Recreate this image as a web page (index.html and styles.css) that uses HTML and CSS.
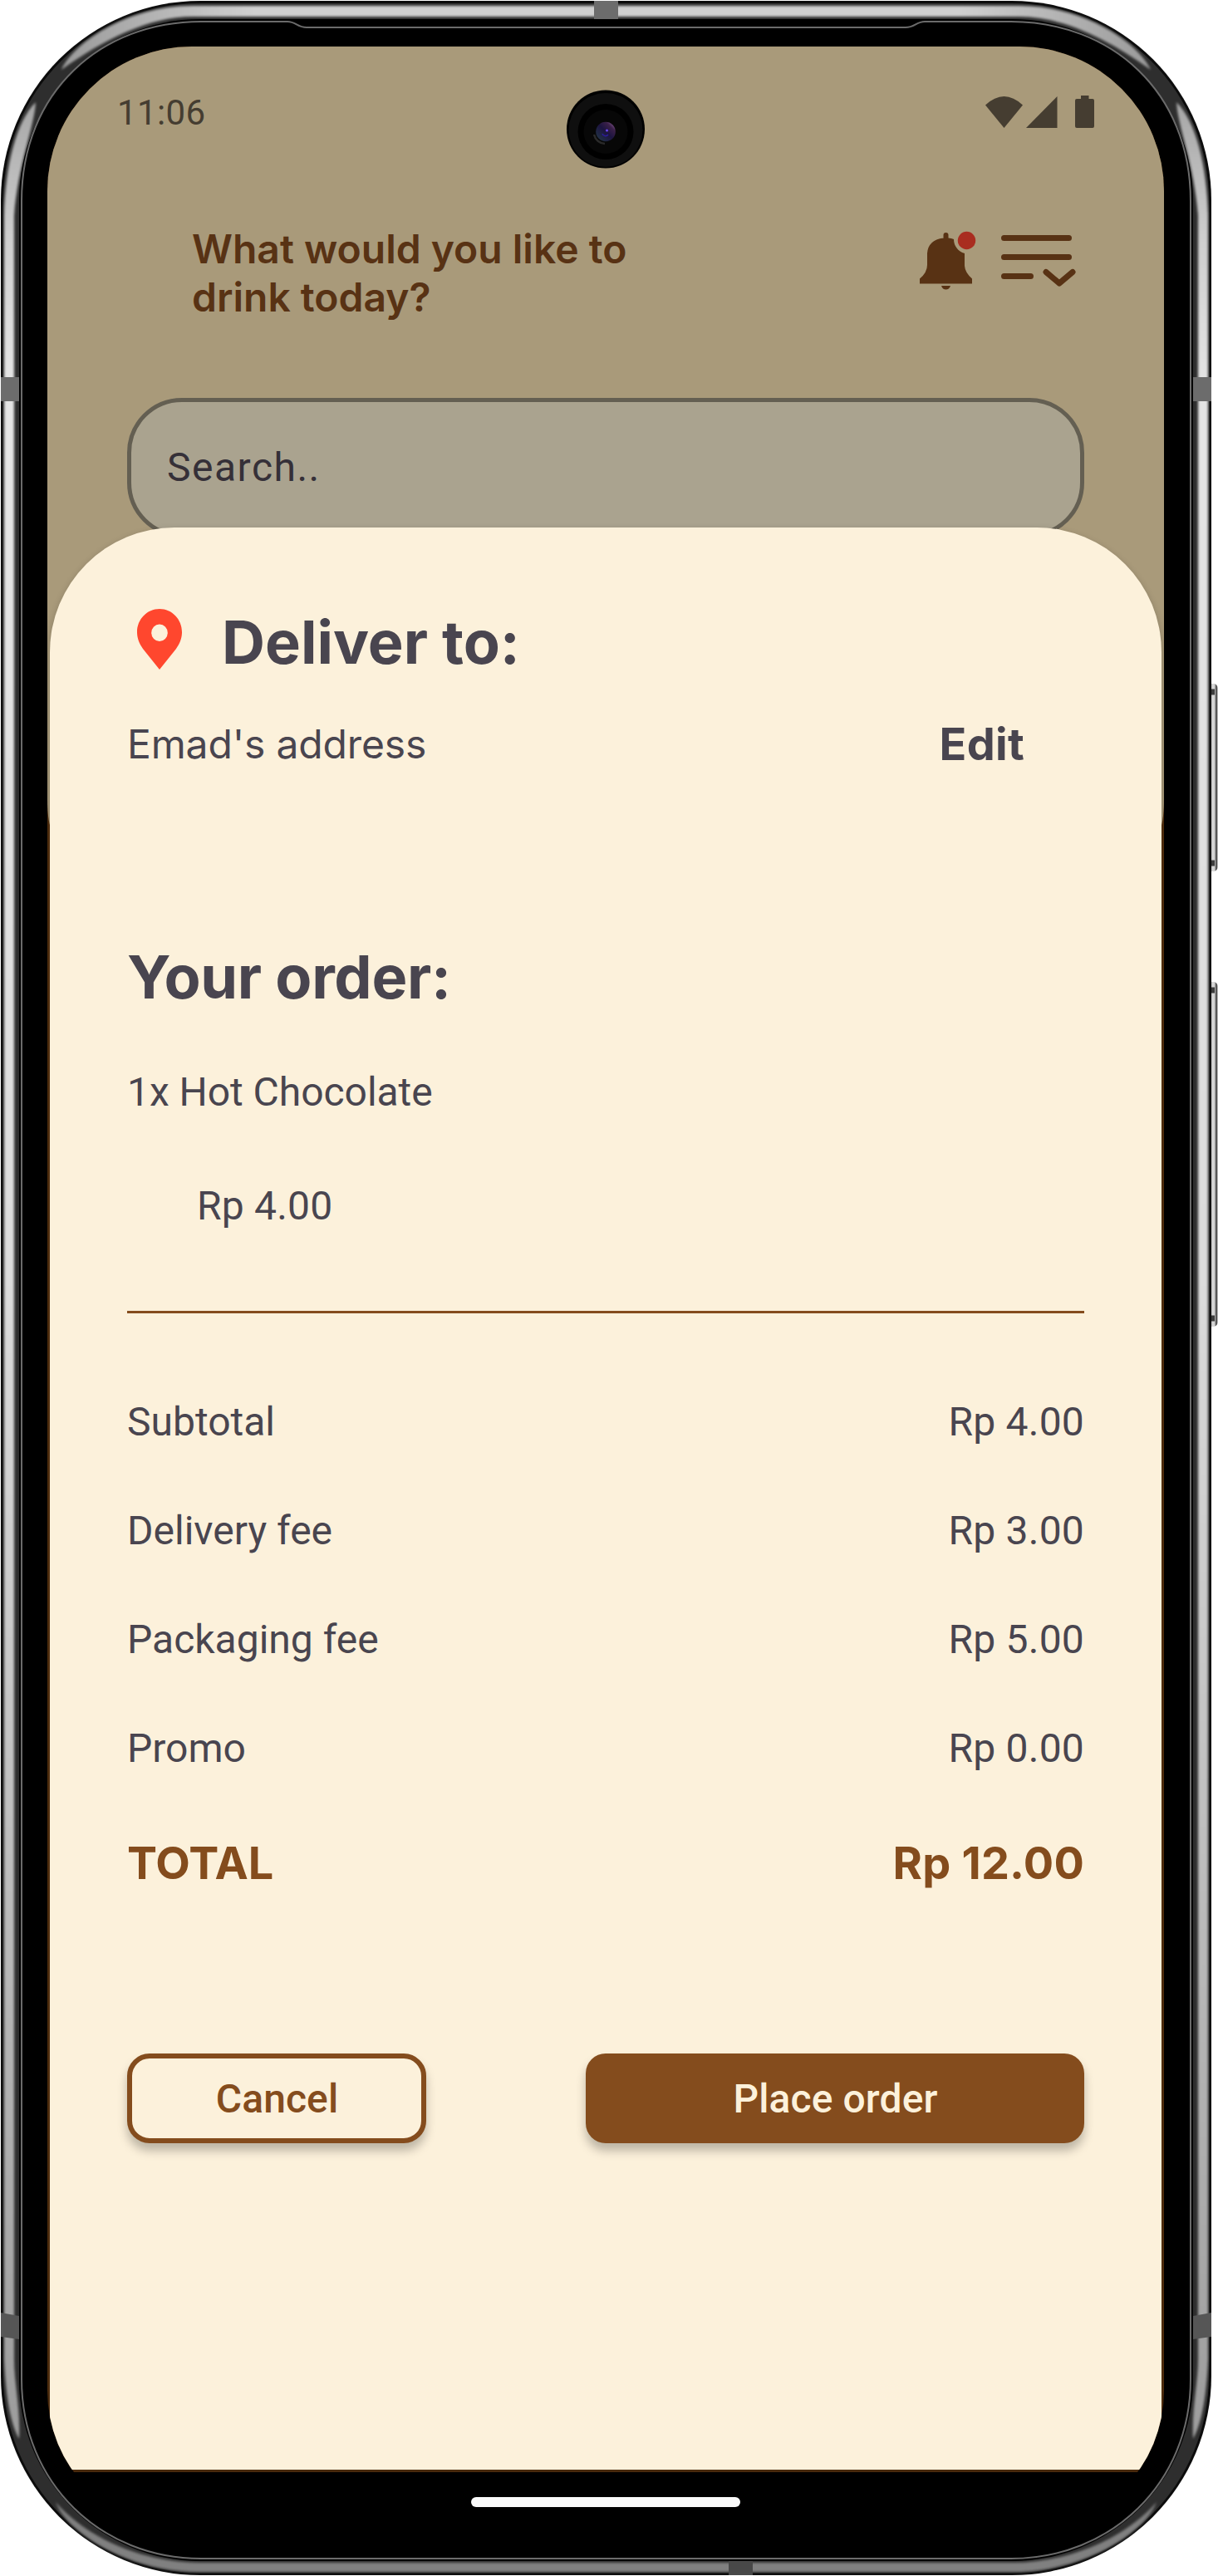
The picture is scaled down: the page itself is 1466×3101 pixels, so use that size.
FILE: index.html
```html
<!DOCTYPE html>
<html lang="en">
<head>
<meta charset="utf-8">
<title>Order summary</title>
<link rel="stylesheet" href="styles.css">
</head>
<body>
<div class="phone">
  <svg class="frame" viewBox="0 0 1466 3101" aria-hidden="true">
    <defs>
      <filter id="soft" x="-5%" y="-5%" width="110%" height="110%"><feGaussianBlur stdDeviation="1.6"/></filter>
      <linearGradient id="side" x1="0" y1="120" x2="0" y2="2940" gradientUnits="userSpaceOnUse">
        <stop offset="0" stop-color="#a5a5a5"/><stop offset=".06" stop-color="#cfcfcf"/><stop offset=".12" stop-color="#e4e4e4"/><stop offset=".5" stop-color="#dcdcdc"/><stop offset=".88" stop-color="#adadad"/><stop offset="1" stop-color="#9c9c9c"/>
      </linearGradient>
      <linearGradient id="top" x1="70" y1="0" x2="1390" y2="0" gradientUnits="userSpaceOnUse">
        <stop offset="0" stop-color="#999"/><stop offset=".18" stop-color="#d0d0d0"/><stop offset=".82" stop-color="#d0d0d0"/><stop offset="1" stop-color="#999"/>
      </linearGradient>
      <linearGradient id="key" x1="1456" y1="0" x2="1466" y2="0" gradientUnits="userSpaceOnUse">
        <stop offset="0" stop-color="#bbb"/><stop offset=".45" stop-color="#d8d8d8"/><stop offset=".6" stop-color="#ccc"/><stop offset=".8" stop-color="#3c3c3c"/><stop offset="1" stop-color="#888"/>
      </linearGradient>
    </defs>
    <g class="keys">
      <rect x="1450" y="823" width="15.500" height="226" rx="5" fill="url(#key)"/>
      <rect x="1450" y="1182" width="15.500" height="415" rx="5" fill="url(#key)"/>
      <path d="M1458 833h4M1458 1039h4M1458 1192h4M1458 1587h4" stroke="#3c3c3c" stroke-width="7"/>
    </g>
    <rect x="1" y="1" width="1457" height="3099" rx="240" fill="#0c0c0c"/>
    <rect x="4" y="4" width="1451" height="3093" rx="237" fill="#2e2e2e"/>
    <g filter="url(#soft)">
      <path fill="url(#top)" d="M74 84C86 55 150 7 232 7H1227C1309 7 1373 55 1385 84C1335 48 1280 20 1227 20H232C179 20 124 48 74 84Z"/>
      <path fill="#808080" d="M67 3012C78 3045 150 3096 240 3096H1219C1309 3096 1381 3045 1392 3012C1350 3060 1280 3085 1219 3085H240C179 3085 109 3060 67 3012Z"/>
      <path fill="url(#side)" d="M43 123C20 145 6 200 5 260V2840C7 2890 14 2920 23 2936C25 2900 17 2870 17 2840V260C21 200 42 150 43 123Z"/>
      <path fill="url(#side)" d="M1416 123C1439 145 1453 200 1454 260V2840C1452 2890 1445 2920 1436 2936C1434 2900 1442 2870 1442 2840V260C1438 200 1417 150 1416 123Z"/>
    </g>
    <g fill="#6c6c6c">
      <rect x="715" y="1" width="29" height="22"/>
      <rect x="1" y="454" width="22" height="29"/>
      <rect x="1436" y="454" width="22" height="29"/>
      <path fill="#565656" d="M1 2784l22 4v28l-22-3zM1458 2784l-22 4v28l22-3z"/>
      <rect x="877" y="3083" width="29" height="17" fill="#484848"/>
    </g>
    <rect x="23" y="23" width="1413" height="3060" rx="218" fill="#000"/>
    <path fill="none" stroke="#6b6b6b" stroke-width="2" d="M26 242C26 110 122 26 242 26H346C356 26 358 33 369 33H1090C1101 33 1103 26 1113 26H1217C1337 26 1433 110 1433 242V2864C1433 2990 1337 3080 1217 3080H242C122 3080 26 2990 26 2864Z"/>
  </svg>

  <div class="screen">
    <main class="app">
      <div class="backdrop">
        <div class="status">
          <span class="clock">11:06</span>
          <svg class="status-icons" width="132" height="40" viewBox="0 0 132 40" fill="#453d31">
            <path d="M0 11.500Q22.500-9.500 45 11.500L22.500 39Z"/>
            <path d="M49 39L86.500 1V39Z"/>
            <path d="M115 0h9.500v4H129q2 0 2 2V37q0 2-2 2H110q-2 0-2-2V6q0-2 2-2h5Z"/>
          </svg>
        </div>
        <header class="header">
          <h1 class="greeting">What would you like to<br>drink today?</h1>
          <svg class="header-icons" width="190" height="72" viewBox="0 0 190 72">
            <path fill="#583214" d="M28.500 9V5a3 3 0 0 1 6 0V8.500Q38 8.500 41 10C41 18 46 24.500 54 27V42Q54.500 50 63 57.500V63.500H0V57.500Q9 50 9 41V27Q10 11 28.500 8.500ZM26 66H37Q35.500 70.500 31.500 70.500T26 66Z"/>
            <circle cx="56.500" cy="11.500" r="10.700" fill="#a92d20"/>
            <path fill="none" stroke="#583214" stroke-width="7" stroke-linecap="round" stroke-linejoin="round" d="M101.500 8.500h78M101.500 31.500h78M101.500 54.500h32M152 49.500l16 13.500 16-13.500"/>
          </svg>
        </header>
        <div class="search">Search..</div>
      </div>

      <section class="sheet">
        <div class="deliver">
          <svg class="pin" width="54" height="73" viewBox="0 0 54 73">
            <path fill="#ff472e" fill-rule="evenodd" d="M27 0C12 0 0 12.500 0 28C0 36 3 42 7 48L27 73L47 48C51 42 54 36 54 28C54 12.500 42 0 27 0ZM27 18.500a9.800 10.250 0 0 1 0 20.500a9.800 10.250 0 0 1 0-20.500Z"/>
          </svg>
          <h2 class="title">Deliver to:</h2>
        </div>
        <div class="row address">
          <span class="address-name">Emad's address</span>
          <span class="edit">Edit</span>
        </div>
        <h2 class="title order-title">Your order:</h2>
        <p class="item">1x Hot Chocolate</p>
        <p class="item item-price">Rp 4.00</p>
        <hr class="rule">
        <div class="fees">
          <div class="row"><span>Subtotal</span><span class="price">Rp 4.00</span></div>
          <div class="row"><span>Delivery fee</span><span class="price">Rp 3.00</span></div>
          <div class="row"><span>Packaging fee</span><span class="price">Rp 5.00</span></div>
          <div class="row"><span>Promo</span><span class="price">Rp 0.00</span></div>
        </div>
        <div class="row total"><span>TOTAL</span><span class="price">Rp 12.00</span></div>
        <div class="actions">
          <button class="btn cancel">Cancel</button>
          <button class="btn place">Place order</button>
        </div>
      </section>
    </main>
    <div class="nav"><span class="handle"></span></div>
    <svg class="camera" width="94" height="95" viewBox="0 0 94 95">
      <defs><linearGradient id="lens" x1="0" y1="1" x2="1" y2="0"><stop offset="0" stop-color="#243c48"/><stop offset=".5" stop-color="#1c1440"/><stop offset=".75" stop-color="#3a2048"/><stop offset="1" stop-color="#a070b0"/></linearGradient></defs>
      <circle cx="47" cy="47.500" r="47"/>
      <circle cx="47" cy="48.500" r="44.500" fill="#0f0f0f"/>
      <circle cx="47" cy="50.500" r="33.500"/>
      <circle cx="47" cy="50.500" r="26.500" fill="#070707"/>
      <path d="M33 54a14 14 0 0 0 13 11" fill="none" stroke="#2a2a2a" stroke-width="2.500"/>
      <circle cx="47" cy="50.500" r="11.800" fill="url(#lens)"/>
      <path d="M43 53a4 4 0 0 0 7 1" fill="none" stroke="#2c1c9c" stroke-width="1.500"/>
      <circle cx="48.500" cy="49" r="1.500" fill="#6a48f0"/>
    </svg>
  </div>
</div>
</body>
</html>
```
FILE: styles.css
```css
* { box-sizing: border-box; }
body { margin: 0; background: #fff; font-family: Roboto, sans-serif; color: #49454f; }
h1, h2, p { margin: 0; }

.phone { position: relative; width: 1466px; height: 3101px; overflow: hidden; padding: 56px 0 0 57px; }
.frame { position: absolute; inset: 0; width: 1466px; height: 3101px; }
.screen { position: relative; width: 1344px; height: 2989px; border-radius: 174px 174px 167px 167px; overflow: hidden; background: #000; display: flex; flex-direction: column; }

.app { height: 2920px; background: #53300f; display: flex; flex-direction: column; }
.backdrop { flex: none; height: 942px; margin-bottom: -363px; padding: 58px 96px 0; background: #a99a7a; border-radius: 0 0 6px 6px / 0 0 36px 36px; }

.status { height: 44px; display: flex; justify-content: space-between; align-items: flex-start; }
.clock { margin-left: -12px; font-size: 42px; line-height: 44px; letter-spacing: .4px; color: #453d31; }
.status-icons { margin: 1px -13px 0 0; }

.header { display: flex; justify-content: space-between; margin-top: 111px; padding: 0 9px 0 78px; }
.greeting { font: 600 48px/58px Inter, sans-serif; color: #583214; padding-top: 2px; margin-bottom: -1px; }
.header-icons { margin: 9px -1px 0 0; }
.search { height: 168px; margin-top: 93px; padding-left: 43px; border: 5px solid #645f52; border-radius: 66px; background: #aaa38f; font-size: 48px; line-height: 158px; letter-spacing: 1.5px; color: #353038; }

.sheet { position: relative; flex: 1; margin: 0 3px 3px; padding: 98px 93px 0; background: #fcf1db; border-radius: 150px 150px 0 0; box-shadow: 0 3px 9px rgba(0, 0, 0, .2); display: flex; flex-direction: column; }
.deliver { display: flex; align-items: flex-start; gap: 48px; padding-left: 12px; height: 90px; }
.title { font: 700 72px/87px Inter, sans-serif; }
.deliver .title { margin-top: -4px; }
.row { display: flex; justify-content: space-between; }
.address { margin-top: 40px; padding-right: 72px; font: 400 48px/66px Inter, sans-serif; letter-spacing: -.14px; }
.edit { font-size: 54px; font-weight: 700; letter-spacing: .3px; }
.order-title { margin-top: 203px; letter-spacing: -.35px; }
.item { font-size: 48px; line-height: 72px; margin-top: 60px; letter-spacing: -.05px; }
.item-price { margin: 65px 0 0 84px; letter-spacing: .2px; }
.price { letter-spacing: .2px; }
.rule { width: 100%; height: 3px; margin: 90px 0 0; border: 0; background: #844c1d; }
.fees { margin-top: 95px; display: flex; flex-direction: column; gap: 59px; font-size: 48px; line-height: 72px; }
.total { margin-top: 64px; font: 700 54px/76px Inter, sans-serif; color: #844c1d; }
.actions { display: flex; justify-content: space-between; margin-top: 191px; }
.btn { height: 108px; padding: 2px 0 0 1px; border: 0; font: 500 48px/106px Roboto, sans-serif; letter-spacing: .1px; box-shadow: 0 9px 12px rgba(0, 0, 0, .25); }
.cancel { width: 360px; border: 6px solid #844c1d; border-radius: 27px; background: #fcf1db; color: #844c1d; line-height: 94px; }
.place { width: 600px; border-radius: 24px; background: #844c1d; color: #fcf1db; }

.nav { flex: 1; display: flex; justify-content: center; padding-top: 30px; }
.handle { width: 324px; height: 12px; border-radius: 6px; background: #fafafa; }
.camera { position: absolute; left: 625px; top: 52px; }
```
